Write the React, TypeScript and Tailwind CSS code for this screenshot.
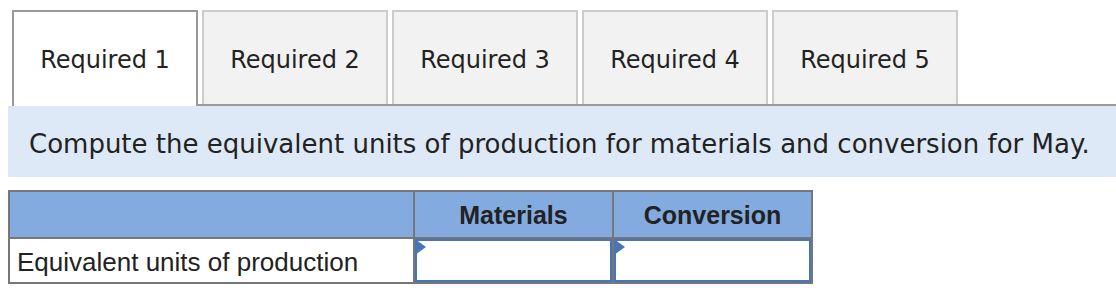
import React from 'react'

const tabs = ['Required 1', 'Required 2', 'Required 3', 'Required 4', 'Required 5']

function InputCell() {
  return (
    <div className="relative bg-white border-2 border-[#4a74ba]">
      <div className="absolute -left-[2px] -top-[2px] w-0 h-0 border-t-[8px] border-b-[8px] border-l-[11px] border-t-transparent border-b-transparent border-l-[#4a74ba]"></div>
    </div>
  )
}

export default function App() {
  return (
    <div className="w-[1116px] h-[292px] bg-white pt-[10px]" style={{ fontFamily: '"DejaVu Sans", Verdana, sans-serif' }}>
      <div className="flex items-end pl-[12px]">
        <div className="w-[186px] h-[96px] border-2 border-b-0 border-[#999] bg-white flex items-center justify-center pt-[2px] text-[24px] text-[#222]">
          {tabs[0]}
        </div>
        <div className="flex-1 flex gap-[4px] pl-[4px] border-b-2 border-[#999]">
          {tabs.slice(1).map((t) => (
            <div key={t} className="w-[186px] h-[94px] border-2 border-b-0 border-[#ccc] bg-[#f2f2f2] flex items-center justify-center pt-[4px] text-[24px] text-[#222]">
              {t}
            </div>
          ))}
        </div>
      </div>

      <div className="ml-[8px] h-[71px] bg-[#dde9f7] flex items-center pl-[21px] pt-[5px] text-[26px] text-[#222]">
        Compute the equivalent units of production for materials and conversion for May.
      </div>

      <div
        className="ml-[8px] mt-[13px] w-[805px] grid grid-cols-[403px_197px_197px] grid-rows-[45px_43px] gap-[2px] p-[2px] bg-[#777]"
        style={{ fontFamily: '"Liberation Sans", Arial, sans-serif' }}
      >
        <div className="bg-[#83abe0]"></div>
        <div className="bg-[#83abe0] flex items-center justify-center pt-[2px] font-bold text-[25px] text-[#222]">Materials</div>
        <div className="bg-[#83abe0] flex items-center justify-center pt-[2px] font-bold text-[25px] text-[#222]">Conversion</div>
        <div className="bg-white flex items-center pl-[7px] pt-[3px] text-[26px] text-[#222]">Equivalent units of production</div>
        <InputCell />
        <InputCell />
      </div>
    </div>
  )
}
